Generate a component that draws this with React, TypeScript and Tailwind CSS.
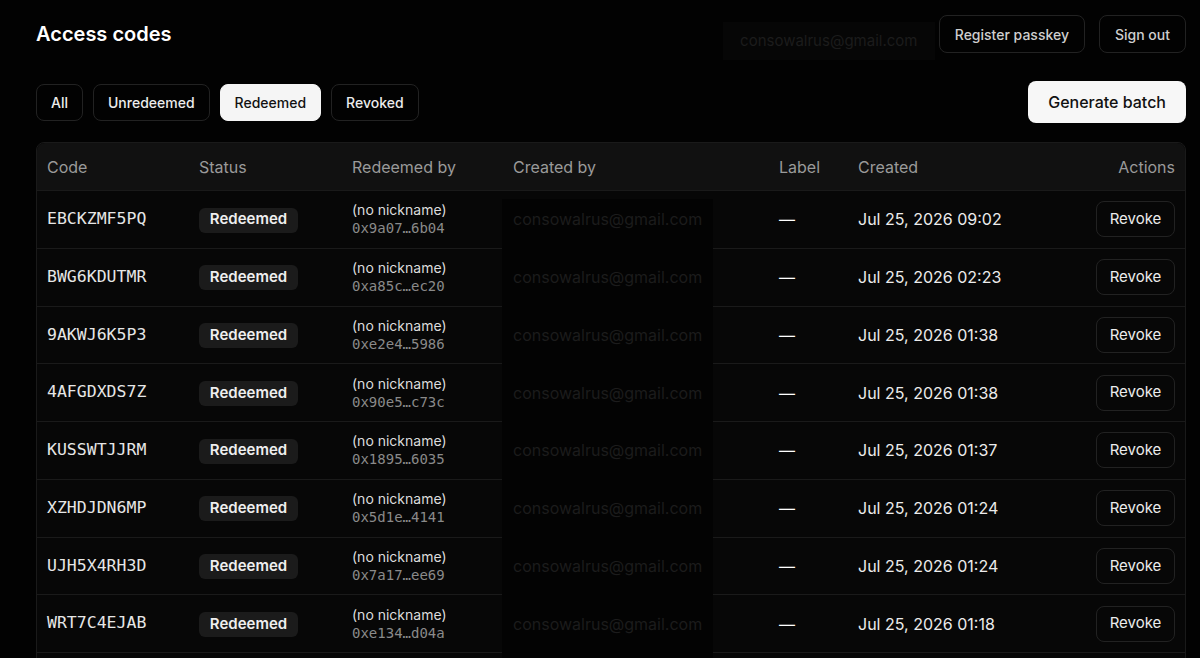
import React from 'react';

const ROWS = [
  { code: 'EBCKZMF5PQ', addr: '0x9a07…6b04', created: 'Jul 25, 2026 09:02' },
  { code: 'BWG6KDUTMR', addr: '0xa85c…ec20', created: 'Jul 25, 2026 02:23' },
  { code: '9AKWJ6K5P3', addr: '0xe2e4…5986', created: 'Jul 25, 2026 01:38' },
  { code: '4AFGDXDS7Z', addr: '0x90e5…c73c', created: 'Jul 25, 2026 01:38' },
  { code: 'KUSSWTJJRM', addr: '0x1895…6035', created: 'Jul 25, 2026 01:37' },
  { code: 'XZHDJDN6MP', addr: '0x5d1e…4141', created: 'Jul 25, 2026 01:24' },
  { code: 'UJH5X4RH3D', addr: '0x7a17…ee69', created: 'Jul 25, 2026 01:24' },
  { code: 'WRT7C4EJAB', addr: '0xe134…d04a', created: 'Jul 25, 2026 01:18' },
];

const FILTERS = ['All', 'Unredeemed', 'Redeemed', 'Revoked'];
const COLS = 'grid grid-cols-[152px_153px_161px_266px_79px_203px_1fr]';
const MONO = "font-['DejaVu_Sans_Mono',monospace]";

export default function App() {
  return (
    <div className="h-[658px] w-[1200px] overflow-hidden bg-[#020202] pl-9 pr-[14px] font-['Inter',sans-serif] text-[#ececec]">
      {/* Top bar */}
      <div className="flex h-[70px] items-start justify-between">
        <h1 className="mt-[21px] text-[20px] font-semibold leading-[26px] text-white">Access codes</h1>
        <div className="mt-[15px] flex items-start">
          <div className="mr-1 mt-[7px] flex h-[38px] w-[212px] items-center justify-center bg-[#060606] text-[15px] text-[#1c1c1c]">
            consowalrus@gmail.com
          </div>
          <button className="h-[38px] rounded-lg border border-[#222] px-[15px] text-[14px] font-medium text-[#cfcfcf]">
            Register passkey
          </button>
          <button className="ml-[14px] h-[38px] rounded-lg border border-[#222] px-[15px] text-[14px] font-medium text-[#cfcfcf]">
            Sign out
          </button>
        </div>
      </div>

      {/* Filters */}
      <div className="flex h-[73px] items-start justify-between">
        <div className="mt-[14px] flex gap-[10px]">
          {FILTERS.map((f) => (
            <button
              key={f}
              className={
                f === 'Redeemed'
                  ? 'h-[37px] rounded-lg border border-[#f5f5f5] bg-[#f5f5f5] px-[14px] text-[14px] font-medium text-[#111]'
                  : 'h-[37px] rounded-lg border border-[#222] px-[14px] text-[14px] font-medium text-[#ececec]'
              }
            >
              {f}
            </button>
          ))}
        </div>
        <button className="mt-[11px] h-[42px] rounded-lg bg-[#f7f7f7] px-[20px] text-[16px] font-medium text-[#111]">
          Generate batch
        </button>
      </div>

      {/* Table */}
      <div className="relative -mt-px rounded-lg border border-[#1a1a1a] bg-[#070707]">
        <div className={`${COLS} h-[47px] items-center rounded-t-lg bg-[#111] text-[16px] text-[#9a9a9a]`}>
          <div className="px-[10px]">Code</div>
          <div className="px-[10px]">Status</div>
          <div className="px-[10px]">Redeemed by</div>
          <div className="px-[10px]">Created by</div>
          <div className="px-[10px]">Label</div>
          <div className="px-[10px]">Created</div>
          <div className="px-[10px] text-right">Actions</div>
        </div>

        {/* redacted column */}
        <div className="absolute bottom-0 left-[465px] top-[56px] w-[211px] bg-[#030303]" />

        {ROWS.map((r) => (
          <div key={r.code} className={`${COLS} h-[57.75px] items-center border-t border-[#1a1a1a]`}>
            <div className={`px-[10px] text-[16.5px] text-[#e6e6e6] ${MONO}`}>{r.code}</div>
            <div className="px-[10px]">
              <span className="inline-flex h-[25px] w-[99px] items-center justify-center rounded-md bg-[#1b1b1b] pb-px text-[15px] font-semibold text-[#efefef]">
                Redeemed
              </span>
            </div>
            <div className="px-[10px] leading-[18px]">
              <div className="text-[14px] text-[#dcdcdc]">(no nickname)</div>
              <div className={`text-[14px] text-[#8a8a8a] ${MONO}`}>{r.addr}</div>
            </div>
            <div className="relative z-10 px-[10px] text-[16px] text-[#1c1c1c]">consowalrus@gmail.com</div>
            <div className="px-[10px] text-[16px] text-white">—</div>
            <div className="px-[10px] text-[16px] text-[#ececec]">{r.created}</div>
            <div className="flex justify-end px-[10px]">
              <button className="h-[36px] w-[79px] rounded-lg border border-[#222] text-[15px] text-[#ececec]">Revoke</button>
            </div>
          </div>
        ))}
        <div className="h-[20px] border-t border-[#1a1a1a]" />
      </div>
    </div>
  );
}
